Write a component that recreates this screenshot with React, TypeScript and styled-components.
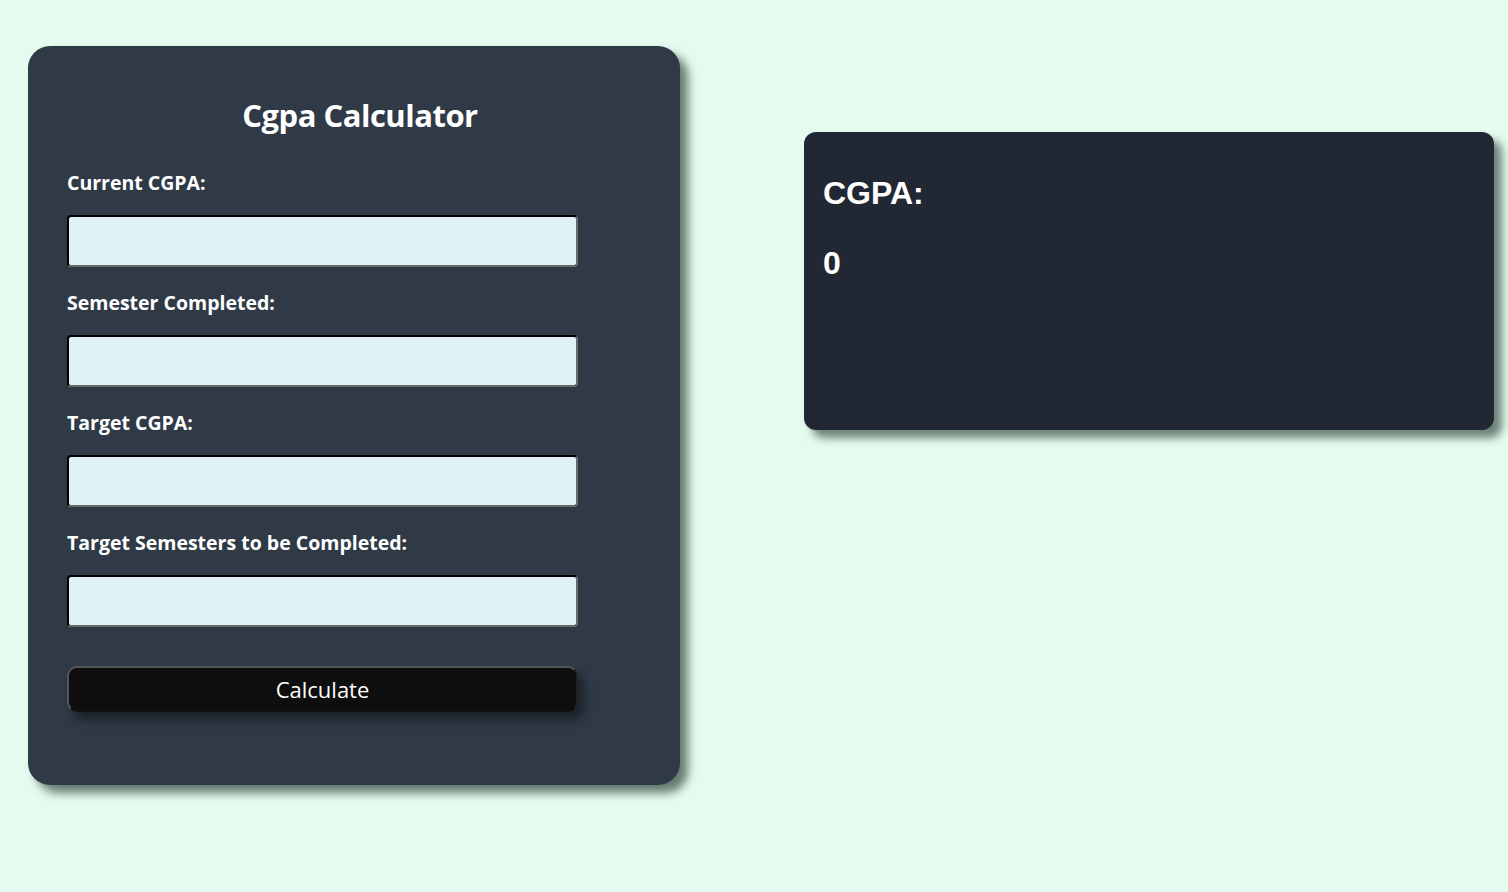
import React from "react";
import styled, { createGlobalStyle } from "styled-components";

const Global = createGlobalStyle`
  html, body { margin: 0; padding: 0; }
  body {
    background: #e6fbef;
    font-family: "Comic Sans MS", "Open Sans", "DejaVu Sans", sans-serif;
    width: 1508px;
    height: 892px;
    overflow: hidden;
  }
`;

const Page = styled.div`
  display: flex;
  align-items: flex-start;
  padding: 46px 0 0 28px;
  gap: 124px;
`;

const FormCard = styled.div`
  width: 652px;
  height: 739px;
  box-sizing: border-box;
  background: #303a47;
  border-radius: 22px;
  box-shadow: 8px 8px 10px rgba(60, 80, 70, 0.75);
  padding: 47px 39px 0 39px;
  display: flex;
  flex-direction: column;
`;

const Title = styled.h1`
  margin: 0 0 33px 0;
  padding-left: 4px;
  color: #ffffff;
  font-size: 31px;
  font-weight: 700;
  text-align: center;
  width: 578px;
  line-height: 44px;
  letter-spacing: -0.5px;
`;

const Field = styled.div`
  display: flex;
  flex-direction: column;
`;

const Label = styled.label`
  color: #ffffff;
  font-size: 19.5px;
  font-weight: 700;
  line-height: 28px;
  height: 28px;
  margin-bottom: 17px;
  margin-top: -1px;
  padding-bottom: 1px;
`;

const Input = styled.input`
  width: 511px;
  height: 52px;
  box-sizing: border-box;
  background: #e0f2f5;
  border: 2px inset #767676;
  border-top-color: #222;
  border-left-color: #222;
  border-right-color: #6a6a6a;
  border-bottom-color: #6a6a6a;
  border-radius: 4px;
  margin: 0 0 23px 0;
  font-size: 18px;
  padding: 0 10px;
`;

const Button = styled.button`
  width: 511px;
  height: 46px;
  margin-top: 16px;
  background: #0e0e0e;
  color: #ffffff;
  font-family: inherit;
  font-size: 22px;
  border: 2px solid #555;
  border-bottom-color: #111;
  border-right-color: #222;
  border-radius: 10px;
  box-shadow: 6px 8px 10px rgba(20, 24, 30, 0.7);
  cursor: pointer;
`;

const ResultCard = styled.div`
  margin-top: 86px;
  width: 690px;
  height: 298px;
  box-sizing: border-box;
  background: #212733;
  border-radius: 12px;
  box-shadow: 8px 8px 8px rgba(60, 80, 70, 0.7);
  padding: 42px 19px;
  color: #ffffff;
  font-family: "Liberation Sans", Arial, sans-serif;
`;

const ResultHeading = styled.h2`
  margin: 0 0 32px 0;
  font-size: 32px;
  font-weight: 700;
  line-height: 38px;
`;

const ResultValue = styled.h2`
  margin: 0;
  font-size: 32px;
  font-weight: 700;
  line-height: 38px;
`;

const fields = [
  "Current CGPA:",
  "Semester Completed:",
  "Target CGPA:",
  "Target Semesters to be Completed:",
];

export default function App() {
  return (
    <>
      <Global />
      <Page>
        <FormCard>
          <Title>Cgpa Calculator</Title>
          {fields.map((f) => (
            <Field key={f}>
              <Label>{f}</Label>
              <Input type="text" />
            </Field>
          ))}
          <Button>Calculate</Button>
        </FormCard>
        <ResultCard>
          <ResultHeading>CGPA:</ResultHeading>
          <ResultValue>0</ResultValue>
        </ResultCard>
      </Page>
    </>
  );
}
